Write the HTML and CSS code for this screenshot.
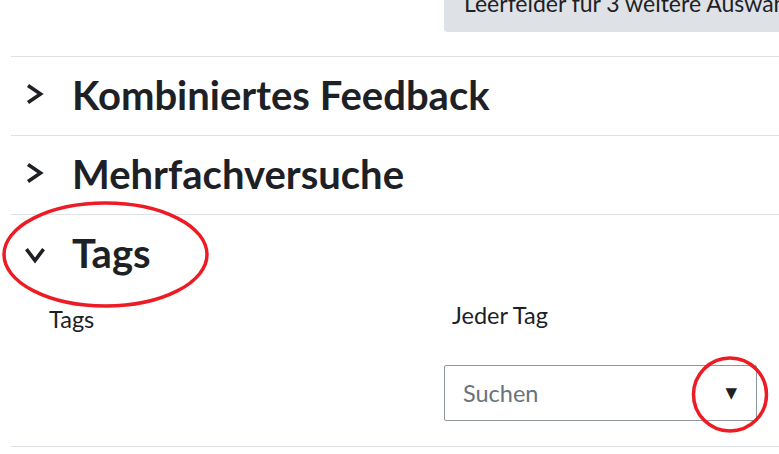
FILE: index.html
```html
<!DOCTYPE html>
<html lang="de">
<head>
<meta charset="utf-8">
<title>Tags</title>
<link rel="stylesheet" href="styles.css">
</head>
<body>
<div class="page">
  <div class="top-row">
    <span class="btn">Leerfelder für 3 weitere Auswahlmöglichkeiten</span>
  </div>
  <div class="section">
    <div class="sec-head">
      <svg class="chev chev-right" viewBox="0 0 20 20" width="20" height="20"><polyline points="4.5,2.5 15.5,10 4.5,17.5" fill="none" stroke="#1d2125" stroke-width="3.6" stroke-linecap="square" stroke-linejoin="miter"/></svg>
      <h3 class="sec-title">Kombiniertes Feedback</h3>
    </div>
  </div>
  <div class="section">
    <div class="sec-head">
      <svg class="chev chev-right" viewBox="0 0 20 20" width="20" height="20"><polyline points="4.5,2.5 15.5,10 4.5,17.5" fill="none" stroke="#1d2125" stroke-width="3.6" stroke-linecap="square" stroke-linejoin="miter"/></svg>
      <h3 class="sec-title">Mehrfachversuche</h3>
    </div>
  </div>
  <div class="section open">
    <div class="sec-head">
      <svg class="chev chev-down" viewBox="0 0 20 20" width="20" height="20"><polyline points="2.5,4.5 10,14.5 17.5,4.5" fill="none" stroke="#1d2125" stroke-width="3.6" stroke-linecap="square" stroke-linejoin="miter"/></svg>
      <h3 class="sec-title">Tags</h3>
    </div>
    <div class="form-row">
      <div class="form-label">Tags</div>
      <div class="form-field">
        <div class="field-label">Jeder Tag</div>
        <div class="select">
          <span class="placeholder">Suchen</span>
          <span class="arrow">▼</span>
        </div>
      </div>
    </div>
  </div>
</div>
<svg class="annot" width="779" height="454" viewBox="0 0 779 454">
  <ellipse cx="105.5" cy="254.5" rx="101.5" ry="51.5" fill="none" stroke="#ed1c24" stroke-width="3.5"/>
  <circle cx="730" cy="394.5" r="36.5" fill="none" stroke="#ed1c24" stroke-width="3.5"/>
</svg>
</body>
</html>
```
FILE: styles.css
```css
html, body {
  margin: 0;
  padding: 0;
  background: #ffffff;
  overflow: hidden;
}
body {
  width: 779px;
  height: 454px;
  position: relative;
  font-family: "Lato", "Open Sans", sans-serif;
  color: #1d2125;
}
.page {
  padding-left: 11px;
}
.top-row {
  display: flex;
  align-items: flex-start;
  height: 56px;
  border-bottom: 1px solid #dee2e6;
  padding-left: 433px;
  white-space: nowrap;
  overflow: hidden;
}
.btn {
  display: block;
  flex: none;
  margin-top: -27px;
  padding: 16px 20px 15px 20px;
  background: #dee2e6;
  border-radius: 4px;
  font-size: 23px;
  line-height: 28px;
  color: #1d2125;
}
.section {
  border-bottom: 1px solid #dee2e6;
}
.sec-head {
  height: 78px;
  display: flex;
  align-items: center;
}
.chev {
  margin-left: 14px;
  width: 20px;
  height: 20px;
  flex: none;
}
.chev-right {
  margin-top: -4px;
}
.chev-down {
  margin-top: 3px;
}
.sec-title {
  margin: -2px 0 0 27px;
  font-size: 40px;
  font-weight: 700;
  line-height: 1;
}
.form-row {
  display: flex;
  padding-bottom: 25px;
}
.form-label {
  width: 433px;
  padding-left: 38px;
  padding-top: 12px;
  box-sizing: border-box;
  font-size: 23.5px;
}
.form-field {
  width: 313px;
}
.field-label {
  box-sizing: border-box;
  height: 72px;
  padding-left: 8px;
  padding-top: 8px;
  font-size: 23.5px;
}
.select {
  box-sizing: border-box;
  height: 56px;
  border: 1px solid #8f959e;
  border-radius: 2px;
  display: flex;
  align-items: center;
  justify-content: space-between;
  padding: 0 19px 0 18px;
}
.placeholder {
  color: #6a737b;
  font-size: 23.5px;
}
.arrow {
  font-size: 15px;
  color: #1d2125;
  font-family: "DejaVu Sans", sans-serif;
}
.annot {
  position: absolute;
  left: 0;
  top: 0;
  pointer-events: none;
}
```
